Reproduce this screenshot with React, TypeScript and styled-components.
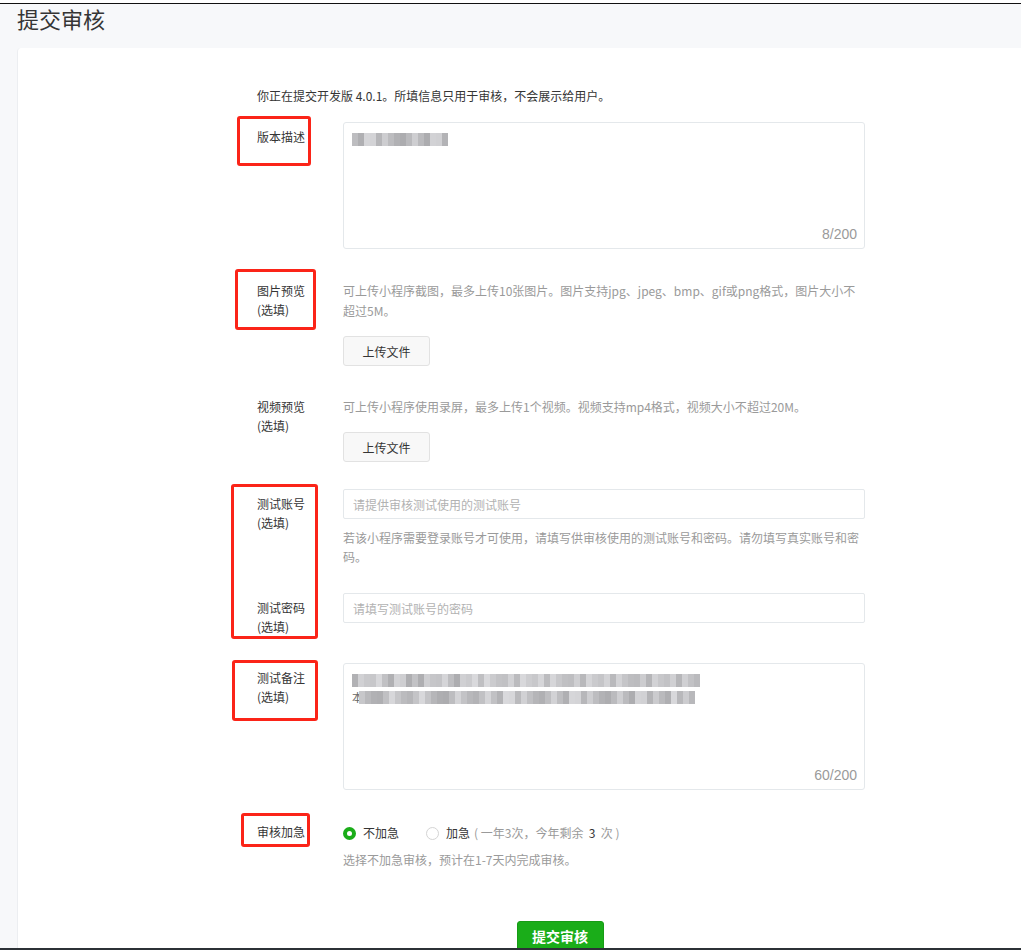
import React from "react";
import styled, { createGlobalStyle } from "styled-components";

const GlobalStyle = createGlobalStyle`
  html, body {
    margin: 0;
    padding: 0;
    background: #fff;
  }
  body {
    font-family: "Noto Sans CJK SC", "Liberation Sans", sans-serif;
    font-size: 12px;
    color: #353535;
  }
  * { box-sizing: border-box; }
`;

// pseudo-random greys for the pixelated (blurred) text
const shades = (n: number, seed: number) =>
  Array.from({ length: n }, (_, i) => 172 + ((i * 29 + seed * 17 + ((i * i) % 11) * 3) % 46));

function Mosaic({ cells, seed, lead }: { cells: number; seed: number; lead?: string }) {
  return (
    <MosaicLine>
      {lead && <Lead>{lead}</Lead>}
      {shades(cells, seed).map((g, i) => (
        <Cell key={i} style={{ background: `rgb(${g},${g},${g + 3})` }} />
      ))}
    </MosaicLine>
  );
}

export default function App() {
  return (
    <>
      <GlobalStyle />
      <Page>
        <Header>
          <Title>提交审核</Title>
        </Header>
        <Card>
          <Intro>你正在提交开发版 4.0.1。所填信息只用于审核，不会展示给用户。</Intro>

          <Row $gap={16}>
            <Label>
              版本描述
              <Mark $left={-20} $top={-6} $w={74} $h={50} />
            </Label>
            <Control>
              <Area>
                <Mosaic cells={16} seed={1} />
                <Counter>8/200</Counter>
              </Area>
            </Control>
          </Row>

          <Row $gap={27}>
            <Label>
              图片预览
              <br />
              (选填)
              <Mark $left={-22} $top={-7} $w={81} $h={61} />
            </Label>
            <Control>
              <Desc>
                可上传小程序截图，最多上传10张图片。图片支持jpg、jpeg、bmp、gif或png格式，图片大小不超过5M。
              </Desc>
              <UploadButton>上传文件</UploadButton>
            </Control>
          </Row>

          <Row $gap={26}>
            <Label>
              视频预览
              <br />
              (选填)
            </Label>
            <Control>
              <Desc>可上传小程序使用录屏，最多上传1个视频。视频支持mp4格式，视频大小不超过20M。</Desc>
              <UploadButton>上传文件</UploadButton>
            </Control>
          </Row>

          <Row $gap={27}>
            <Label>
              测试账号
              <br />
              (选填)
              <Mark $left={-26} $top={-5} $w={87} $h={155} />
            </Label>
            <Control>
              <Input placeholder="请提供审核测试使用的测试账号" />
              <Hint>若该小程序需要登录账号才可使用，请填写供审核使用的测试账号和密码。请勿填写真实账号和密码。</Hint>
            </Control>
          </Row>

          <Row $gap={27}>
            <Label>
              测试密码
              <br />
              (选填)
            </Label>
            <Control>
              <Input placeholder="请填写测试账号的密码" />
            </Control>
          </Row>

          <Row $gap={27}>
            <Label>
              测试备注
              <br />
              (选填)
              <Mark $left={-25} $top={-3} $w={86} $h={61} />
            </Label>
            <Control>
              <Area>
                <Mosaic cells={58} seed={3} />
                <Mosaic cells={56} seed={7} lead="本" />
                <Counter>60/200</Counter>
              </Area>
            </Control>
          </Row>

          <Row $gap={27}>
            <Label>
              审核加急
              <Mark $left={-16} $top={-4} $w={69} $h={34} />
            </Label>
            <Control>
              <RadioGroup>
                <RadioItem>
                  <Dot $checked />
                  不加急
                </RadioItem>
                <RadioItem>
                  <Dot />
                  加急
                  <Muted>
                    ( 一年3次，今年剩余 &nbsp;<Strong>3</Strong>&nbsp; 次 )
                  </Muted>
                </RadioItem>
              </RadioGroup>
              <RadioHint>选择不加急审核，预计在1-7天内完成审核。</RadioHint>
            </Control>
          </Row>

          <Footer>
            <SubmitButton>提交审核</SubmitButton>
          </Footer>
        </Card>
      </Page>
    </>
  );
}

const Page = styled.div`
  margin-top: 3px;
  height: 947px;
  border-top: 1px solid #111;
  border-bottom: 2px solid #2c3136;
  background: #f7f8fa;
  display: flex;
  flex-direction: column;
  overflow: hidden;
`;

const Header = styled.div`
  flex-shrink: 0;
  height: 44px;
  padding: 0 17px;
`;

const Title = styled.h1`
  margin: 0;
  font-size: 22px;
  font-weight: normal;
  line-height: 28px;
  color: #353535;
`;

const Card = styled.div`
  flex: 1 0 auto;
  margin-left: 17px;
  background: #fff;
  border-left: 1px solid #eceef1;
  border-radius: 4px 0 0 0;
  padding: 38px 0 0 239px;
`;

const Intro = styled.div`
  line-height: 20px;
  color: #353535;
`;

const Row = styled.div<{ $gap: number }>`
  display: flex;
  margin-top: ${(p) => p.$gap}px;
`;

const Label = styled.div`
  position: relative;
  width: 86px;
  flex-shrink: 0;
  padding-top: 5px;
  line-height: 19px;
  color: #353535;
`;

const Mark = styled.span<{ $left: number; $top: number; $w: number; $h: number }>`
  position: absolute;
  left: ${(p) => p.$left}px;
  top: ${(p) => p.$top}px;
  width: ${(p) => p.$w}px;
  height: ${(p) => p.$h}px;
  border: 3px solid #fb2418;
  border-radius: 3px;
  pointer-events: none;
`;

const Control = styled.div`
  width: 522px;
`;

const Area = styled.div`
  height: 127px;
  border: 1px solid #e4e8eb;
  border-radius: 3px;
  padding: 8px 7px 4px 8px;
  display: flex;
  flex-direction: column;
`;

const MosaicLine = styled.div`
  display: flex;
  align-items: center;
  height: 17px;
`;

const Lead = styled.span`
  font-size: 11px;
  color: #666;
  line-height: 13px;
  margin-right: -4px;
`;

const Cell = styled.span`
  display: inline-block;
  width: 6px;
  height: 13px;
`;

const Counter = styled.div`
  margin-top: auto;
  align-self: flex-end;
  font-family: "Liberation Sans", sans-serif;
  font-size: 14px;
  line-height: 20px;
  color: #9a9a9a;
`;

const Desc = styled.div`
  padding-top: 5px;
  line-height: 20px;
  color: #9a9a9a;
`;

const Hint = styled.div`
  margin-top: 9px;
  line-height: 19px;
  color: #9a9a9a;
`;

const UploadButton = styled.button`
  display: block;
  margin-top: 15px;
  width: 87px;
  height: 30px;
  background: #f8f8f8;
  border: 1px solid #e2e2e2;
  border-radius: 3px;
  font-family: inherit;
  font-size: 12px;
  color: #353535;
  padding: 0;
`;

const Input = styled.input`
  display: block;
  width: 522px;
  height: 30px;
  border: 1px solid #e4e8eb;
  border-radius: 2px;
  padding: 0 9px;
  font-family: inherit;
  font-size: 12px;
  color: #353535;
  outline: none;
  &::placeholder {
    color: #b2b2b2;
  }
`;

const RadioGroup = styled.div`
  display: flex;
  gap: 27px;
  padding-top: 6px;
  line-height: 20px;
`;

const RadioItem = styled.label`
  display: flex;
  align-items: center;
  color: #353535;
`;

const Dot = styled.span<{ $checked?: boolean }>`
  display: inline-block;
  width: 13px;
  height: 13px;
  border-radius: 50%;
  margin-right: 7px;
  background: #fff;
  border: ${(p) => (p.$checked ? "4px solid #1aad19" : "1px solid #d4d4d4")};
`;

const Muted = styled.span`
  color: #9a9a9a;
  margin-left: 4px;
  white-space: pre;
`;

const Strong = styled.span`
  color: #353535;
`;

const RadioHint = styled.div`
  margin-top: 7px;
  line-height: 20px;
  color: #9a9a9a;
`;

const Footer = styled.div`
  width: 606px;
  margin-top: 51px;
  display: flex;
  justify-content: center;
`;

const SubmitButton = styled.button`
  width: 87px;
  height: 30px;
  background: #1aad19;
  border: 1px solid #179b16;
  border-radius: 3px;
  color: #fff;
  font-family: inherit;
  font-size: 14px;
  font-weight: bold;
  padding: 0;
`;
